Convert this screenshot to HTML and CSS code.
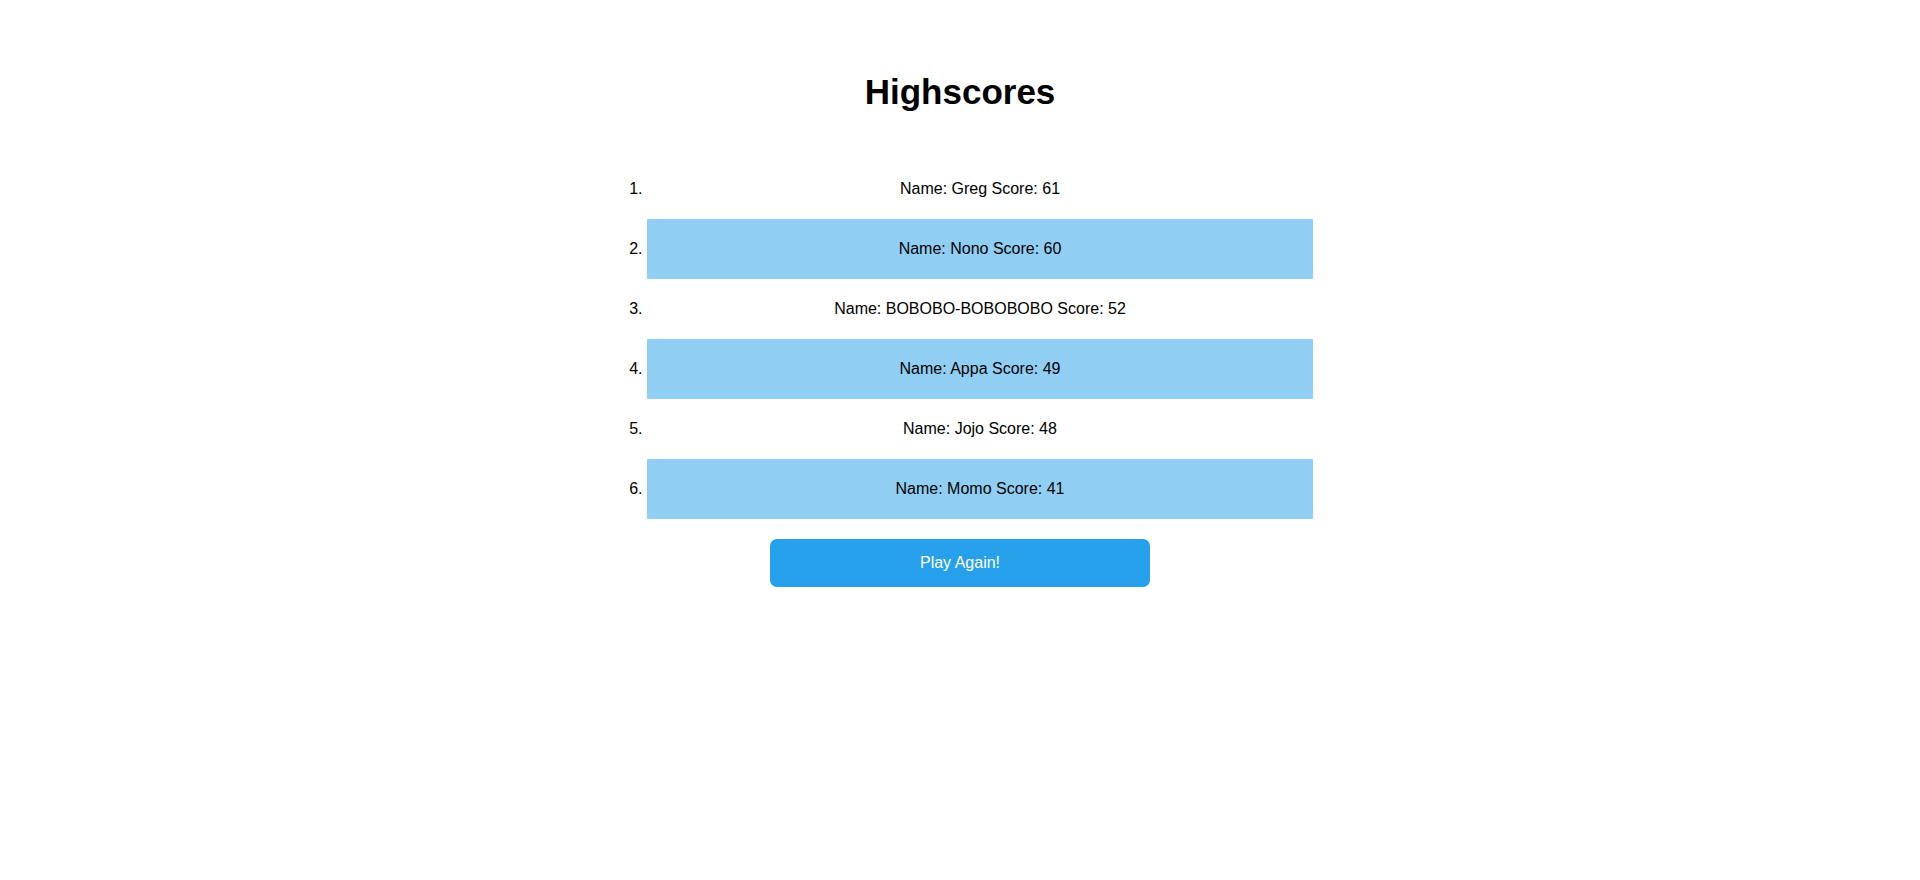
FILE: index.html
```html
<!DOCTYPE html>
<html lang="en">
<head>
<meta charset="utf-8">
<title>Highscores</title>
<link rel="stylesheet" href="styles.css">
</head>
<body>
<main class="page">
  <h1 class="title">Highscores</h1>
  <ol class="scores">
    <li class="score">Name: Greg Score: 61</li>
    <li class="score score-alt">Name: Nono Score: 60</li>
    <li class="score">Name: BOBOBO-BOBOBOBO Score: 52</li>
    <li class="score score-alt">Name: Appa Score: 49</li>
    <li class="score">Name: Jojo Score: 48</li>
    <li class="score score-alt">Name: Momo Score: 41</li>
  </ol>
  <button class="play-btn" type="button">Play Again!</button>
</main>
</body>
</html>
```

FILE: styles.css
```css
html, body {
  margin: 0;
  padding: 0;
  background: #ffffff;
}

body {
  font-family: "Liberation Sans", Arial, sans-serif;
  color: #000000;
  font-size: 16px;
}

.page {
  display: flex;
  flex-direction: column;
  align-items: center;
  padding-top: 72px;
}

.title {
  margin: 0;
  font-size: 35px;
  line-height: 40px;
  font-weight: bold;
}

.scores {
  width: 706px;
  box-sizing: border-box;
  margin: 47px 0 0 0;
  padding: 0 0 0 40px;
}

.score {
  height: 60px;
  line-height: 60px;
  text-align: center;
}

.score-alt {
  background: #90cef4;
}

.play-btn {
  margin-top: 20px;
  width: 380px;
  height: 48px;
  border: none;
  border-radius: 7px;
  background: #27a0eb;
  color: #ffffff;
  font-family: "Liberation Sans", Arial, sans-serif;
  font-size: 16px;
  cursor: pointer;
}
```
